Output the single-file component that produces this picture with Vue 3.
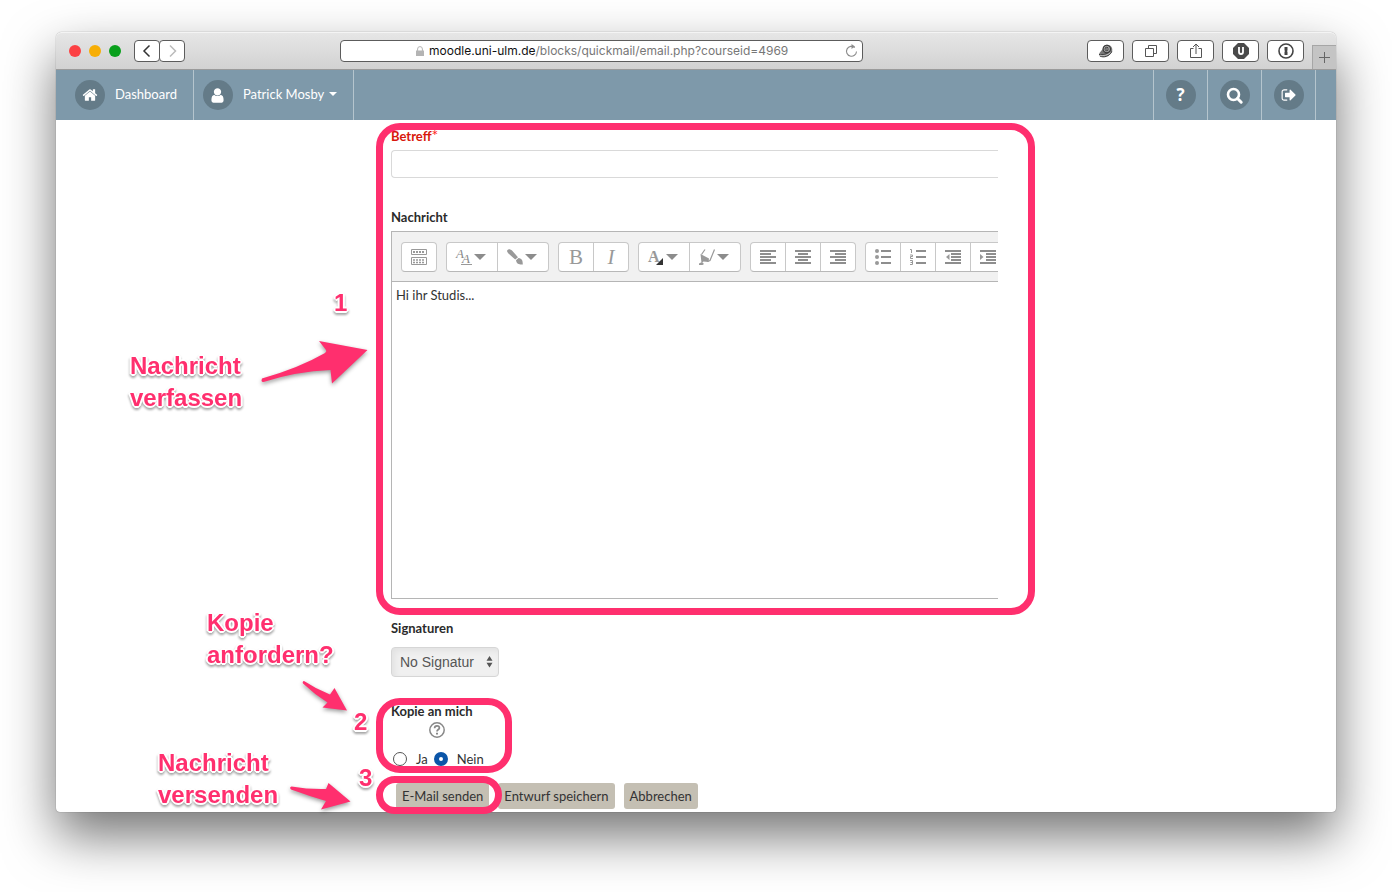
<script setup>
import { ref } from 'vue'

const url = ref('moodle.uni-ulm.de/blocks/quickmail/email.php?courseid=4969')
const subject = ref('')
const message = ref('Hi ihr Studis...')
const copy = ref('nein')
</script>

<template>
  <div class="desktop">
    <div class="window">
      <header class="chrome">
        <div class="lights"><i class="red"></i><i class="amber"></i><i class="green"></i></div>
        <div class="history">
          <button aria-label="Zurück"><svg width="12" height="14" viewBox="0 0 12 14"><path d="M8.500 1.500 3 7l5.500 5.500" fill="none" stroke="#333" stroke-width="1.500" /></svg></button>
          <button aria-label="Vorwärts"><svg width="12" height="14" viewBox="0 0 12 14"><path d="M4 1.500 9.500 7 4 12.500" fill="none" stroke="#bbb" stroke-width="1.500" /></svg></button>
        </div>
        <div class="gap-left"></div>
        <div class="address">
          <svg class="lock" width="8" height="10" viewBox="0 0 8 10"><path d="M0 4.500h8V10H0z" fill="#b4b4b4" /><path d="M1.600 5V3a2.400 2.400 0 0 1 4.800 0v2" fill="none" stroke="#b4b4b4" /></svg>
          <a href="#" class="url"><span class="host">{{ url.split('/')[0] }}</span>{{ url.slice(url.indexOf('/')) }}</a>
          <button class="reload" aria-label="Neu laden"><svg width="13" height="14" viewBox="0 0 13 14"><path d="M9.800 3.500A5 5 0 1 0 11.500 7.500M6 2.500h3" fill="none" stroke="#8c8c8c" stroke-width="1.100" /><path d="M6.500 0v5L10 2.600z" fill="#8c8c8c" /></svg></button>
        </div>
        <div class="gap-right"></div>
        <div class="tools">
          <button aria-label="Verlauf"><svg width="16" height="16" viewBox="0 0 16 16"><path d="M1 11.500c1 2.500 5 3 8.500 1.500 4-1.700 5.500-5 4.500-8C13 2.500 11 1.500 8.800 1.700 6 2 4.500 3.700 4.700 6L1.500 10z" fill="#777" /><circle cx="8.800" cy="6" r="3.600" fill="none" stroke="#3c3c3c" stroke-width="1.300" /><path d="M10.300 7.200A2 2 0 1 1 10 4.600M1 11.500c4 .6 8-.3 11-3.500M1.800 13c4 2 9.500.5 12-4.500" fill="none" stroke="#3c3c3c" /><path d="M2 12.300c4 .8 7.500 0 10.500-2.700" fill="none" stroke="#ddd" stroke-width=".7" /><circle cx="8.800" cy="6" r="2.700" fill="none" stroke="#ccc" stroke-width=".6" /></svg></button>
          <button aria-label="Tabs"><svg width="14" height="14" viewBox="0 0 14 14"><path d="M1.500 4.500h8v8h-8zM4.500 4.500v-3h8v8h-3" fill="none" stroke="#555" /></svg></button>
          <button aria-label="Teilen"><svg width="14" height="16" viewBox="0 0 14 16"><path d="M4.500 5.500h-3v9h11v-9h-3M7 11V1M4 4l3-3 3 3" fill="none" stroke="#555" /></svg></button>
          <button aria-label="Blocker"><svg width="16" height="16" viewBox="0 0 16 16"><path d="M5 0h6l5 5v6l-5 5H5l-5-5V5z" fill="#4a4a4a" /><path d="M6 4v5q0 2 2 2t2-2V4" fill="none" stroke="#fff" stroke-width="1.800" /></svg></button>
          <button aria-label="Passwörter"><svg width="16" height="16" viewBox="0 0 16 16"><circle cx="8" cy="8" r="7" fill="none" stroke="#444" stroke-width="1.600" /><path d="M6.500 4h3v3.500l-.6.600.6.600V12h-3V8.700l.6-.6-.6-.6z" fill="#444" /></svg></button>
        </div>
        <button class="new-tab" aria-label="Neuer Tab"><svg width="11" height="11" viewBox="0 0 11 11"><path d="M5.500 0v11M0 5.500h11" stroke="#666" /></svg></button>
      </header>

      <nav class="navbar">
        <a href="#" class="item home">
          <span class="disc"><svg width="16" height="16" viewBox="0 0 1792 1792"><path fill="#fff" d="M1472 992v480q0 26-19 45t-45 19h-384v-384h-256v384h-384q-26 0-45-19t-19-45v-480q0-1 .5-3t.5-3l575-474 575 474q1 2 1 6zm223-69l-62 74q-8 9-21 11h-3q-13 0-21-7l-692-577-692 577q-12 8-24 7-13-2-21-11l-62-74q-8-10-7-23.500t11-21.500l719-599q32-26 76-26t76 26l244 204v-195q0-14 9-23t23-9h192q14 0 23 9t9 23v408l219 182q10 8 11 21.500t-7 23.500z" /></svg></span>
          <span class="name">Dashboard</span>
        </a>
        <a href="#" class="item">
          <span class="disc"><svg width="17" height="17" viewBox="0 0 1792 1792"><path fill="#fff" d="M1536 1399q0 109-62.500 187t-150.500 78h-854q-88 0-150.500-78t-62.500-187q0-85 8.500-160.500t31.500-152 58.500-131 94-89 134.500-34.500q131 128 313 128t313-128q76 0 134.500 34.500t94 89 58.500 131 31.500 152 8.500 160.500zm-256-887q0 159-112.500 271.500t-271.500 112.500-271.500-112.500-112.500-271.500 112.500-271.500 271.500-112.500 271.500 112.500 112.500 271.500z" /></svg></span>
          <span class="name">Patrick Mosby<i class="caret"></i></span>
        </a>
        <div class="fill"></div>
        <a href="#" class="item tool first" aria-label="Hilfe"><span class="disc q">?</span></a>
        <a href="#" class="item tool" aria-label="Suche"><span class="disc"><svg width="17" height="17" viewBox="0 0 17 17"><circle cx="7.500" cy="7.500" r="5.500" fill="none" stroke="#fff" stroke-width="2.600" /><path d="m11.500 11.500 3.700 3.700" stroke="#fff" stroke-width="3" stroke-linecap="round" /></svg></span></a>
        <a href="#" class="item tool" aria-label="Abmelden"><span class="disc"><svg width="16" height="16" viewBox="0 0 1792 1792"><path fill="#fff" d="M704 1440q0 4 1 20t.5 26.500-3 23.500-10 19.500-20.500 6.500h-320q-119 0-203.500-84.500t-84.500-203.500v-704q0-119 84.500-203.500t203.500-84.500h320q13 0 22.500 9.500t9.500 22.500q0 4 1 20t.5 26.500-3 23.500-10 19.500-20.500 6.500h-320q-66 0-113 47t-47 113v704q0 66 47 113t113 47h312l11.500 1 11.500 3 8 5.500 7 9 2 13.500zm928-544q0 26-19 45l-544 544q-19 19-45 19t-45-19-19-45v-288h-448q-26 0-45-19t-19-45v-384q0-26 19-45t45-19h448v-288q0-26 19-45t45-19 45 19l544 544q19 19 19 45z" /></svg></span></a>
      </nav>

      <form class="mail" @submit.prevent>
        <label class="title required" for="subject">Betreff<span class="star">*</span></label>
        <input id="subject" v-model="subject" class="subject" type="text" />

        <label class="title message-title" for="message">Nachricht</label>
        <div class="editor">
          <div class="bar">
            <div class="group">
              <button type="button" aria-label="Mehr"><svg width="16" height="16" viewBox="0 0 16 16"><path d="M.5.500h15v5H.5zM.5 8.500h15v7H.5z" fill="none" stroke="#999" /><path d="M2 3h12" stroke="#999" stroke-width="2" stroke-dasharray="2 1" /><path d="M2 11h12M2 13.500h12" stroke="#999" stroke-width="1.500" stroke-dasharray="2 1" /></svg></button>
            </div>
            <div class="group">
              <button type="button" class="wide" aria-label="Schriftart"><svg width="16" height="16" viewBox="0 0 16 16"><text x="0" y="9" class="glyph-italic">A</text><text x="6" y="14" class="glyph-italic">A</text><path d="M5 15.500h11" stroke="#999" /></svg><i class="drop"></i></button>
              <button type="button" class="wide" aria-label="Pinsel"><svg width="16" height="16" viewBox="0 0 16 16"><path d="M.3 1.200C1.600-.6 3.600.2 5 1.600l6 6.600-2.800 2.300L1.200 4.300C.2 3.300-.3 2.200.3 1.200zM9 11.300l2.500-2.200c3.500.6 4.300 2.600 4.300 6.400-3.400.2-6-.2-6.800-4.200z" fill="#999" /></svg><i class="drop"></i></button>
            </div>
            <div class="group">
              <button type="button" class="serif">B</button>
              <button type="button" class="serif italic">I</button>
            </div>
            <div class="group">
              <button type="button" class="wide" aria-label="Textfarbe"><svg width="16" height="16" viewBox="0 0 16 16"><text x="0" y="13" class="glyph-bold">A</text><path d="M15 9v7H8z" fill="#333" /></svg><i class="drop"></i></button>
              <button type="button" class="wide" aria-label="Hintergrundfarbe"><svg width="16" height="16" viewBox="0 0 16 16"><path d="M6 .5 2.500 5.500M15.500.5l-4.500 11L8.500 12.500" fill="none" stroke="#999" stroke-width="1.200" /><path d="M1.500 5 10 9.500l-.5 3.500-5-.500-2 1.500zM0 14.500l3-1.500 2 2L3.500 16H0z" fill="#999" /></svg><i class="drop"></i></button>
            </div>
            <div class="group">
              <button type="button" aria-label="Links"><svg width="16" height="16" viewBox="0 0 16 16"><path d="M0 2h16M0 5h11M0 8h16M0 11h11M0 14h16" stroke="#8e8e8e" stroke-width="2" /></svg></button>
              <button type="button" aria-label="Zentriert"><svg width="16" height="16" viewBox="0 0 16 16"><path d="M0 2h16M3 5h10M0 8h16M3 11h10M0 14h16" stroke="#8e8e8e" stroke-width="2" /></svg></button>
              <button type="button" aria-label="Rechts"><svg width="16" height="16" viewBox="0 0 16 16"><path d="M0 2h16M5 5h11M0 8h16M5 11h11M0 14h16" stroke="#8e8e8e" stroke-width="2" /></svg></button>
            </div>
            <div class="group">
              <button type="button" aria-label="Liste"><svg width="16" height="16" viewBox="0 0 16 16"><path d="M6 2h10M6 8h10M6 14h10" stroke="#8e8e8e" stroke-width="2" /><circle cx="2" cy="2" r="2" fill="#999" /><circle cx="2" cy="8" r="2" fill="#999" /><circle cx="2" cy="14" r="2" fill="#999" /></svg></button>
              <button type="button" aria-label="Nummerierte Liste"><svg width="16" height="16" viewBox="0 0 16 16"><path d="M6 2h10M6 8h10M6 14h10" stroke="#8e8e8e" stroke-width="2" /><path d="M0 .5h1.500V4M0 6h2.500v1.500H.5v2H3M0 11.500h2.500v4H0M.5 13.500h2" fill="none" stroke="#999" /></svg></button>
              <button type="button" aria-label="Ausrücken"><svg width="16" height="16" viewBox="0 0 16 16"><path d="M0 2h16M6 5h10M6 8h10M6 11h10M0 14h16" stroke="#8e8e8e" stroke-width="2" /><path d="M4.500 5v6L1 8z" fill="#999" /></svg></button>
              <button type="button" aria-label="Einrücken"><svg width="16" height="16" viewBox="0 0 16 16"><path d="M0 2h16M6 5h10M6 8h10M6 11h10M0 14h16" stroke="#8e8e8e" stroke-width="2" /><path d="M0 5v6l3.500-3z" fill="#999" /></svg></button>
            </div>
          </div>
          <textarea id="message" v-model="message" spellcheck="false"></textarea>
        </div>

        <label class="title signature-title" for="signature">Signaturen</label>
        <div class="picker">
          <select id="signature"><option>No Signatur</option></select>
          <svg width="7" height="12" viewBox="0 0 8 14"><path d="M4 0l3.500 5.500h-7zM4 13.500.5 8h7z" fill="#555" /></svg>
        </div>

        <fieldset class="copy">
          <legend class="title">Kopie an mich</legend>
          <button type="button" class="help" aria-label="Hilfe zu Kopie an mich"><svg width="16" height="16" viewBox="0 0 16 16"><circle cx="8" cy="8" r="7.200" fill="none" stroke="#888" stroke-width="1.500" /><path d="M5.600 6.300c0-1.600 1-2.400 2.400-2.400s2.400.9 2.400 2.100C10.400 7.500 8 7.600 8 9.400" fill="none" stroke="#888" stroke-width="1.700" /><path d="M7 10.700h2v1.800H7z" fill="#888" /></svg></button>
          <div class="choices">
            <input id="yes" v-model="copy" type="radio" name="copy" value="ja" /><label for="yes">Ja</label>
            <input id="no" v-model="copy" type="radio" name="copy" value="nein" /><label for="no">Nein</label>
          </div>
        </fieldset>

        <div class="actions">
          <button>E-Mail senden</button>
          <button>Entwurf speichern</button>
          <button>Abbrechen</button>
        </div>
      </form>

      <div class="notes">
        <div class="frame compose"></div>
        <div class="frame copy-frame"></div>
        <div class="frame send"></div>
        <p class="note n-compose">Nachricht<br />verfassen</p>
        <p class="note n-one">1</p>
        <p class="note n-copy">Kopie<br />anfordern?</p>
        <p class="note n-two">2</p>
        <p class="note n-send">Nachricht<br />versenden</p>
        <p class="note n-three">3</p>
        <svg class="arrows" width="320" height="780" viewBox="56 32 320 780" fill="#ff2f6e">
          <path d="M262 378.500Q299 368 325 353q2-1.500 1-3l-7-9 48.500 9-35.500 33.500-1.500-13.500q-35 1.500-67 12-2 0-2-1.500z" />
          <path d="M304 681q12 8 26 13.500l4.500-6.500L347 710.500l-24.500-3 5-5Q314 694 303 683.500q-1-2 1-2.500z" />
          <path d="M291.500 786.500q17 3 34.500 2.500l2.500-6 22 18.500L321 809.500l5-8.500q-17-5-35-11.500-2-2 .5-3z" />
        </svg>
      </div>
    </div>
  </div>
</template>

<style>
body {
  margin: 0;
  background: #fff;
}
</style>

<style scoped>
* {
  box-sizing: border-box;
}
.desktop {
  padding: 32px 56px 80px;
  overflow: hidden;
  font: 13px/20px Lato, "Open Sans", sans-serif;
  color: #333;
}
.window {
  position: relative;
  min-height: calc(100vh - 112px);
  border-radius: 6px 6px 4px 4px;
  background: #fff;
  box-shadow: 0 0 1px rgba(0, 0, 0, 0.6), 0 24px 52px rgba(0, 0, 0, 0.55);
}
button {
  padding: 0;
  font: inherit;
  color: inherit;
}
svg {
  display: block;
  flex: none;
  overflow: visible;
}
.chrome {
  display: flex;
  align-items: center;
  height: 38px;
  padding-left: 13px;
  border-bottom: 1px solid #9b9b9b;
  border-top: 1px solid #f4f4f4;
  border-radius: 6px 6px 0 0;
  background: linear-gradient(#e6e6e6, #d2d2d2);
}
.lights {
  display: flex;
  gap: 8px;
  margin-right: 13px;
}
.lights i {
  width: 12px;
  height: 12px;
  border-radius: 50%;
}
.red {
  background: #fc4144;
}
.amber {
  background: #f7ae06;
}
.green {
  background: #09a01c;
}
.history {
  display: flex;
}
.history button,
.tools button {
  display: flex;
  align-items: center;
  justify-content: center;
  height: 22px;
  border: 1px solid #5c5c5c;
  border-radius: 4px;
  background: #fff;
}
.history button {
  width: 26px;
}
.history button + button {
  margin-left: -1px;
}
.gap-left {
  flex: 155 1 0;
}
.gap-right {
  flex: 224 1 0;
}
.address {
  display: flex;
  align-items: center;
  width: 523px;
  height: 22px;
  padding: 0 4px 0 75px;
  border: 1px solid #5c5c5c;
  border-radius: 4px;
  background: #fff;
  font: 12px/20px Inter, sans-serif;
}
.url {
  margin-left: 5px;
  color: #777;
  text-decoration: none;
  white-space: nowrap;
}
.host {
  color: #111;
}
.reload {
  margin-left: auto;
  border: 0;
  background: none;
}
.tools {
  display: flex;
  gap: 8px;
}
.tools button {
  width: 37px;
}
.new-tab {
  display: flex;
  align-items: center;
  justify-content: center;
  align-self: flex-end;
  width: 24px;
  height: 24px;
  margin-left: 8px;
  border: 1px solid #a6a6a6;
  border-width: 1px 0 0 1px;
  background: #c4c4c4;
}
.navbar {
  display: flex;
  height: 50px;
  padding-right: 20px;
  background: #7e99aa;
}
.item {
  display: flex;
  align-items: center;
  gap: 10px;
  padding: 0 16px 0 9px;
  border-right: 1px solid #b5c5ce;
  color: #fff;
  text-decoration: none;
}
.home {
  padding-left: 19px;
}
.fill {
  flex: 1;
}
.disc {
  display: flex;
  align-items: center;
  justify-content: center;
  flex: none;
  width: 30px;
  height: 30px;
  border-radius: 50%;
  background: #647b88;
}
.q {
  font: bold 17px/30px "Open Sans", sans-serif;
}
.name {
  display: flex;
  align-items: center;
  gap: 5px;
  padding-bottom: 2px;
}
.caret {
  border: 4px solid transparent;
  border-top-color: #fff;
  border-bottom: 0;
}
.tool {
  justify-content: center;
  width: 54px;
  padding: 0;
}
.first {
  width: 55px;
  border-left: 1px solid #b5c5ce;
}
.mail {
  display: flex;
  flex-direction: column;
  max-width: 942px;
  padding: 6px 0 3px 335px;
}
.title {
  display: block;
  padding: 0;
  font-size: 13px;
  font-weight: bold;
  color: #2b2b2b;
}
.title.required {
  color: #d8180c;
}
.star {
  font-size: 16px;
  line-height: 16px;
  font-weight: normal;
  color: #ff2020;
}
.subject {
  height: 28px;
  margin-top: 4px;
  padding: 4px 6px;
  border: 1px solid #d9d9d9;
  border-right: 0;
  border-radius: 4px 0 0 4px;
  outline: 0;
  font: inherit;
}
.message-title {
  margin-top: 29px;
}
.editor {
  height: 368px;
  margin-top: 4px;
  border: 1px solid #b5b5b5;
  border-right: 0;
  display: flex;
  flex-direction: column;
  overflow: hidden;
}
.bar {
  display: flex;
  flex: none;
  gap: 9px;
  padding: 10px 0 9px 9px;
  border-bottom: 1px solid #b5b5b5;
  background: #f1f1f1;
}
.group {
  display: flex;
  flex: none;
  height: 30px;
  border: 1px solid #c8c8c8;
  border-bottom-color: #b8b8b8;
  border-radius: 4px;
  background: #fff;
}
.group button {
  display: flex;
  align-items: center;
  justify-content: center;
  width: 34px;
  border: 0;
  background: none;
  color: #999;
}
.group button + button {
  width: 35px;
  border-left: 1px solid #c8c8c8;
}
.group .wide,
.group .wide + .wide {
  gap: 2px;
  width: 50px;
  padding-right: 2px;
}
.group .wide + .wide {
  width: 51px;
}
.group .serif {
  font: 21px/28px "Liberation Serif", serif;
}
.group .italic {
  font-style: italic;
}
.drop {
  border: 6px solid transparent;
  border-top-color: #8c8c8c;
  border-bottom: 0;
}
.glyph-italic {
  font: italic 13px "Liberation Serif", serif;
  fill: #888;
}
.glyph-bold {
  font: bold 16px "Liberation Serif", serif;
  fill: #999;
}
textarea {
  flex: 1;
  padding: 3px 4px;
  border: 0;
  outline: 0;
  resize: none;
  font: 13px/20px Lato, "Open Sans", sans-serif;
  color: #333;
}
.signature-title {
  margin-top: 19px;
}
.picker {
  display: grid;
  align-self: flex-start;
  align-items: center;
  margin-top: 9px;
}
.picker > * {
  grid-area: 1 / 1;
}
.picker svg {
  justify-self: end;
  margin-right: 6px;
  pointer-events: none;
}
select {
  width: 108px;
  height: 30px;
  padding: 0 8px;
  appearance: none;
  border: 1px solid #d6d6d6;
  border-radius: 4px;
  background: #f0f0f0;
  box-shadow: inset 3px 3px 6px rgba(0, 0, 0, 0.06);
  font: 14px/20px "Liberation Sans", sans-serif;
  color: #555;
}
.copy {
  display: flex;
  flex-direction: column;
  align-items: flex-start;
  min-width: 0;
  margin: 24px 0 0;
  padding: 0;
  border: 0;
}
.help {
  margin: 1px 0 11px 38px;
  border: 0;
  background: none;
}
.choices {
  display: flex;
  align-items: center;
}
.choices input {
  appearance: none;
  width: 14px;
  height: 14px;
  margin: 0 9px 0 2px;
  border: 1px solid #555;
  border-radius: 50%;
  background: #fff;
}
.choices label + input {
  margin-left: 6px;
}
.choices input:checked {
  border: 5px solid #0b55a8;
}
.actions {
  display: flex;
  gap: 9px;
  margin-top: 14px;
  padding-left: 5px;
}
.actions button {
  height: 26px;
  padding: 0 6px;
  border: 0;
  border-radius: 3px;
  background: #c4bfb3;
  white-space: nowrap;
}
.notes {
  position: absolute;
  inset: 0;
  pointer-events: none;
}
.frame {
  position: absolute;
  left: 320px;
  border: 7px solid #ff2f6e;
  border-radius: 24px;
}
.compose {
  top: 91px;
  width: 659px;
  height: 492px;
}
.copy-frame {
  top: 666px;
  width: 136px;
  height: 75px;
}
.send {
  top: 744px;
  width: 126px;
  height: 38px;
}
.note {
  position: absolute;
  margin: 0;
  font: bold 24px/32px "Liberation Sans", sans-serif;
  color: #ff2f6e;
  text-shadow: 2px 0 #fff, -2px 0 #fff, 0 2px #fff, 0 -2px #fff, 1px 1px #fff, -1px 1px #fff, 1px -1px #fff, -1px -1px #fff;
  filter: drop-shadow(0 2px 1px rgba(0, 0, 0, 0.35));
}
.n-compose {
  left: 74px;
  top: 318px;
}
.n-one {
  left: 278px;
  top: 255px;
}
.n-copy {
  left: 151px;
  top: 575px;
}
.n-two {
  left: 298px;
  top: 674px;
}
.n-send {
  left: 102px;
  top: 715px;
}
.n-three {
  left: 303px;
  top: 730px;
}
.arrows {
  position: absolute;
  left: 0;
  top: 0;
  filter: drop-shadow(0 2px 2px rgba(0, 0, 0, 0.4));
}
</style>
